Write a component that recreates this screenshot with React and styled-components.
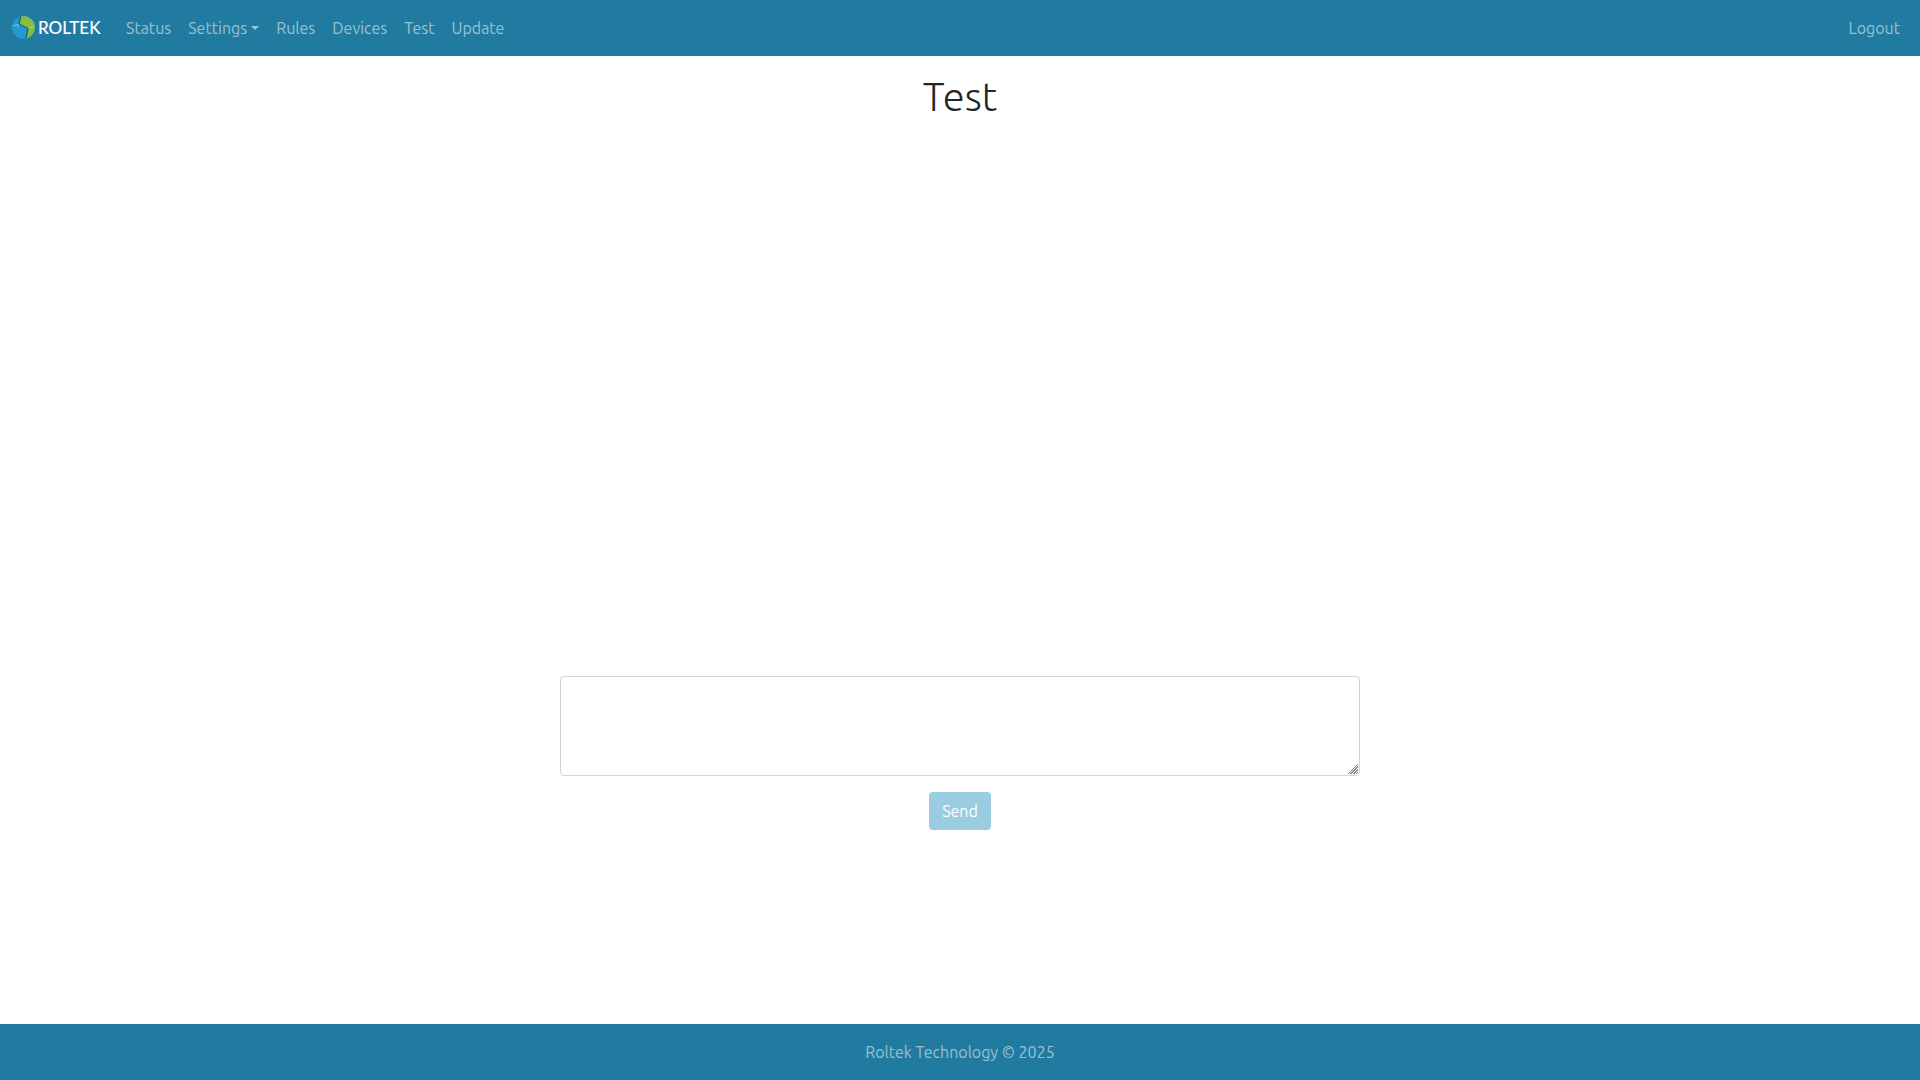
import React, { useState } from 'react';
import styled, { createGlobalStyle } from 'styled-components';

const GlobalStyle = createGlobalStyle`
  :root {
    --primary-color: #217a9f;
    --nav-text: rgba(255, 255, 255, 0.55);
  }

  *,
  *::before,
  *::after {
    box-sizing: border-box;
  }

  body {
    margin: 0;
    background-color: #fff;
    color: #212529;
    font-family: Ubuntu, 'Noto Sans', 'Open Sans', sans-serif;
    font-size: 16px;
    line-height: 24px;
  }
`;

const Page = styled.div`
  display: flex;
  flex-direction: column;
  min-height: 100vh;
`;

const NavbarContainer = styled.nav`
  display: flex;
  align-items: center;
  height: 56px;
  padding: 0 12px;
  background-color: var(--primary-color);
`;

const Brand = styled.a`
  display: flex;
  margin-right: 16px;

  svg {
    display: block;
  }
`;

const NavLinks = styled.ul`
  display: flex;
  flex: 1;
  gap: 1px;
  margin: 0;
  padding: 0;
  list-style: none;
`;

const NavItem = styled.li`
  margin-left: ${(props) => (props.$end ? 'auto' : '0')};
`;

const NavLink = styled.a`
  display: flex;
  align-items: center;
  padding: 8px;
  color: var(--nav-text);
  text-decoration: none;

  &:hover {
    color: rgba(255, 255, 255, 0.75);
  }
`;

const Caret = styled.span`
  margin-left: 4px;
  border-top: 4px solid;
  border-right: 4px solid transparent;
  border-left: 4px solid transparent;
`;

const Main = styled.main`
  display: flex;
  flex: 1;
  flex-direction: column;
  align-items: center;
  padding: 16px;
`;

const Title = styled.h1`
  margin: 0;
  font-size: 40px;
  font-weight: 300;
  line-height: 50px;
`;

const Output = styled.output`
  width: 100%;
  max-width: 800px;
  height: 50vh;
  overflow-y: auto;
`;

const MessageForm = styled.form`
  display: flex;
  flex-direction: column;
  align-items: center;
  gap: 16px;
  width: 100%;
  max-width: 800px;
  padding-top: 14px;
`;

const MessageInput = styled.textarea`
  display: block;
  width: 100%;
  height: 100px;
  padding: 6px 12px;
  border: 1px solid #ced4da;
  border-radius: 4px;
  color: #495057;
  font: inherit;
  resize: vertical;

  &::-webkit-resizer {
    border: solid #fff;
    border-width: 0 1px 1px 0;
    background:
      linear-gradient(135deg, #fff 62%, transparent 62%),
      repeating-linear-gradient(135deg, #888 0 1px, #fff 1px 2px);
  }
`;

const SendButton = styled.button`
  height: 38px;
  padding: 6px 12px;
  border: 1px solid transparent;
  border-radius: 4px;
  background-color: #34a0c7;
  color: #fff;
  font: inherit;

  &:disabled {
    background-color: #9acde1;
  }
`;

const Footer = styled.footer`
  padding: 16px;
  background-color: var(--primary-color);
  color: var(--nav-text);
  text-align: center;
`;

const links = [
  { label: 'Status', href: '#status' },
  { label: 'Settings', href: '#settings', dropdown: true },
  { label: 'Rules', href: '#rules' },
  { label: 'Devices', href: '#devices' },
  { label: 'Test', href: '#test' },
  { label: 'Update', href: '#update' },
];

const Logo = () => (
  <svg width="90" height="30" viewBox="0 0 90 30" aria-hidden="true">
    <circle cx="11.5" cy="14.5" r="11.5" fill="#2499d1" />
    <path d="M8.7 3.3A11.5 11.5 0 0 1 14 25.7L16 15.5L7 11Z" fill="#85bd3f" />
    <path d="M8.7 3.3L7 11L16 15.5L14 25.7" fill="none" stroke="#17617f" strokeWidth="1.3" />
    <path
      d="M1 13L6.5 11.5L6 14.5M16.5 15L22 13.5"
      fill="none"
      stroke="#fff"
      strokeOpacity="0.35"
    />
    <text
      x="26"
      y="21"
      fill="#fff"
      stroke="#fff"
      strokeWidth="0.2"
      fontFamily="Lato, sans-serif"
      fontSize="17"
    >
      ROLTEK
    </text>
  </svg>
);

const Navbar = () => {
  return (
    <NavbarContainer>
      <Brand href="#home" aria-label="Roltek">
        <Logo />
      </Brand>
      <NavLinks>
        {links.map((link) => (
          <NavItem key={link.label}>
            <NavLink href={link.href}>
              {link.label}
              {link.dropdown && <Caret />}
            </NavLink>
          </NavItem>
        ))}
        <NavItem $end>
          <NavLink href="#logout">Logout</NavLink>
        </NavItem>
      </NavLinks>
    </NavbarContainer>
  );
};

const App = () => {
  const [message, setMessage] = useState('');

  const handleSubmit = (e) => {
    e.preventDefault();
    setMessage('');
  };

  return (
    <>
      <GlobalStyle />
      <Page>
        <Navbar />
        <Main>
          <Title>Test</Title>
          <Output />
          <MessageForm onSubmit={handleSubmit}>
            <MessageInput
              aria-label="Message"
              value={message}
              onChange={(e) => setMessage(e.target.value)}
            />
            <SendButton type="submit" disabled={!message}>
              Send
            </SendButton>
          </MessageForm>
        </Main>
        <Footer>Roltek Technology © 2025</Footer>
      </Page>
    </>
  );
};

export default App;
